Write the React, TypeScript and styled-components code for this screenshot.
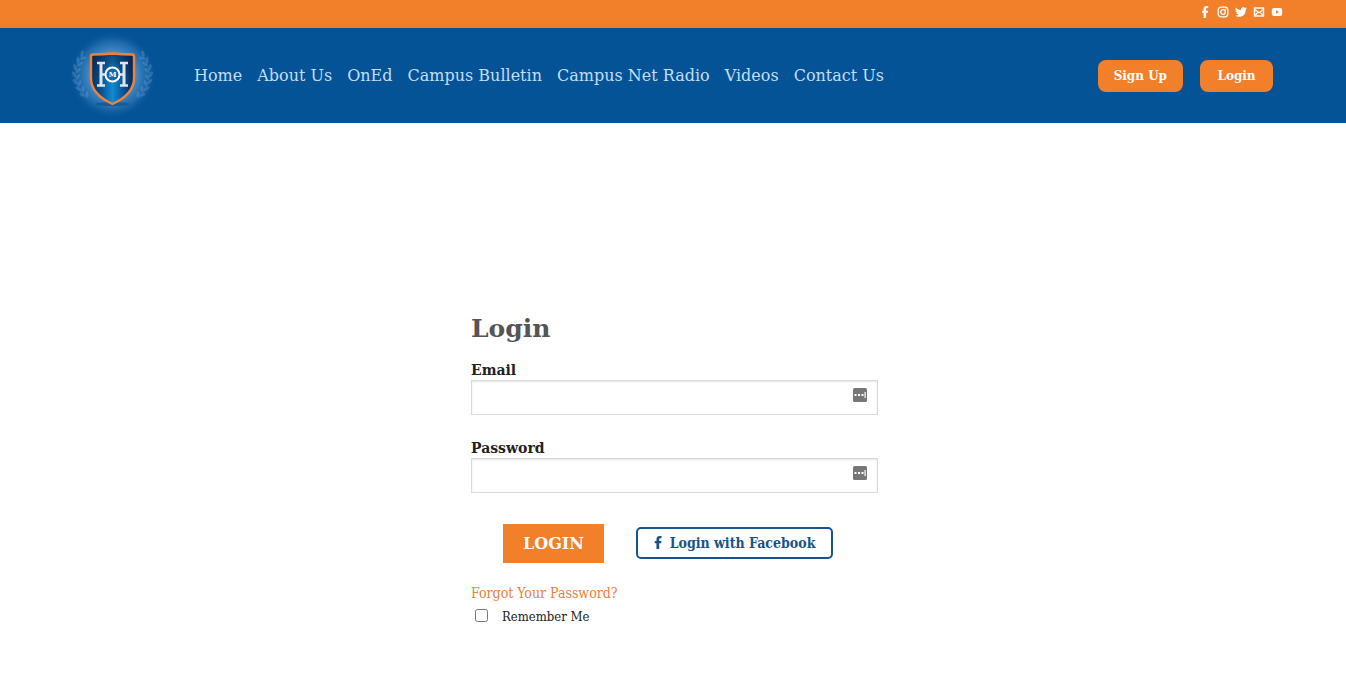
import React from "react";
import styled, { createGlobalStyle } from "styled-components";

const orange = "#f27f2a";
const blue = "#045397";
const condensed = `"DejaVu Serif Condensed", "DejaVu Serif", serif`;

const GlobalStyle = createGlobalStyle`
  *, *::before, *::after { box-sizing: border-box; }
  body {
    margin: 0;
    background: #fff;
    color: #222;
    font-family: "DejaVu Serif", serif;
    font-size: 13px;
  }
`;

const TopBar = styled.div`
  background: ${orange};
  height: 28px;
`;

const Container = styled.div<{ $wide?: boolean }>`
  max-width: ${(p) => (p.$wide ? "1250px" : "1230px")};
  height: 100%;
  margin: 0 auto;
  padding: 0 15px;
  display: flex;
  align-items: center;
`;

const Socials = styled.nav`
  margin-left: auto;
  padding-bottom: 4px;
  display: flex;
  gap: 6px;
`;

const SocialLink = styled.a`
  display: flex;
  color: #fff;
  svg { width: 12px; height: 12px; }
`;

const Header = styled.header`
  background: ${blue};
  height: 95px;
`;

const LogoLink = styled.a`
  display: flex;
  flex: none;
  width: 92px;
  margin: 0 36px 0 -7px;
`;

const Menu = styled.nav`
  display: flex;
  gap: 15px;
`;

const MenuLink = styled.a`
  color: #c3def6;
  font-size: 16px;
  line-height: 24px;
  text-decoration: none;
  white-space: nowrap;
`;

const Actions = styled.div`
  margin-left: auto;
  display: flex;
  gap: 17px;
`;

const PillButton = styled.button`
  min-width: 73px;
  height: 32px;
  padding: 0 16px;
  border: 0;
  border-radius: 8px;
  background: ${orange};
  color: #fff;
  font-family: inherit;
  font-size: 12px;
  font-weight: 700;
  white-space: nowrap;
  cursor: pointer;
`;

const Main = styled.main`
  padding: 188px 0 48px 3px;
`;

const Form = styled.form`
  width: 100%;
  max-width: 407px;
  margin: 0 auto;
`;

const Title = styled.h1`
  margin: 0 0 14px;
  color: #555;
  font-size: 25px;
  line-height: 36px;
`;

const Field = styled.div`
  position: relative;
  margin-bottom: 24px;
`;

const FieldLabel = styled.label`
  display: block;
  font-size: 14px;
  font-weight: 700;
  line-height: 19px;
`;

const FieldInput = styled.input`
  display: block;
  width: 100%;
  height: 35px;
  padding: 0 36px 0 10px;
  border: 1px solid #dadada;
  background: #fff;
  box-shadow: inset 0 1px 2px rgba(0, 0, 0, 0.1);
  font-family: inherit;
  font-size: 14px;
`;

const FieldIcon = styled.svg`
  position: absolute;
  right: 11px;
  bottom: 13px;
`;

const ButtonRow = styled.div`
  display: flex;
  align-items: center;
  gap: 32px;
  margin-top: 31px;
  padding-left: 32px;
`;

const SubmitButton = styled.button`
  height: 39px;
  width: 101px;
  padding: 0;
  border: 0;
  background: ${orange};
  color: #fff;
  font-family: inherit;
  font-size: 16px;
  font-weight: 700;
  text-transform: uppercase;
  cursor: pointer;
`;

const FacebookButton = styled.button`
  display: flex;
  align-items: center;
  justify-content: center;
  gap: 8px;
  width: 197px;
  height: 32px;
  margin-bottom: 2px;
  padding: 0;
  border: 2px solid #17548c;
  border-radius: 5px;
  background: #fff;
  color: #17548c;
  font-family: ${condensed};
  font-size: 14px;
  font-weight: 700;
  white-space: nowrap;
  cursor: pointer;
`;

const ForgotLink = styled.a`
  display: block;
  width: fit-content;
  margin-top: 19px;
  color: #e87f42;
  font-family: ${condensed};
  font-size: 14px;
  line-height: 22px;
  text-decoration: none;
`;

const Remember = styled.label`
  display: flex;
  align-items: center;
  gap: 14px;
  padding-left: 4px;
  font-family: ${condensed};
  line-height: 26px;
`;

const Checkbox = styled.input`
  width: 13px;
  height: 13px;
  margin: 0 0 4px;
`;

function Logo() {
  const crest =
    "M27 24.500Q36.500 24.500 46.500 23.500Q56.500 24.500 66 24.500Q68 24.500 68 26.500V48C68 60 58.500 68.500 46.500 74C34.500 68.500 25 60 25 48V26.500Q25 24.500 27 24.500Z";
  return (
    <svg width="92" height="92" viewBox="0 0 92 92" role="img" aria-label="Campus crest">
      <defs>
        <radialGradient id="glow">
          <stop offset="0" stopColor="#70b4e4" />
          <stop offset="0.450" stopColor="#5c9fd4" stopOpacity="0.900" />
          <stop offset="0.750" stopColor="#3a80bd" stopOpacity="0.550" />
          <stop offset="1" stopColor={blue} stopOpacity="0" />
        </radialGradient>
        <linearGradient id="shield" x1="0" y1="0" x2="1" y2="0">
          <stop offset="0" stopColor="#08305f" />
          <stop offset="0.250" stopColor="#075497" />
          <stop offset="0.500" stopColor="#118bd2" />
          <stop offset="0.750" stopColor="#075497" />
          <stop offset="1" stopColor="#08264e" />
        </linearGradient>
        <linearGradient id="shade" x1="0" y1="0" x2="0" y2="1">
          <stop offset="0" stopColor="#071f45" stopOpacity="0.600" />
          <stop offset="0.500" stopColor="#071f45" stopOpacity="0" />
        </linearGradient>
      </defs>
      <circle cx="46.500" cy="45" r="44" fill="url(#glow)" />
      {[false, true].map((flip) => (
        <g key={String(flip)} transform={flip ? "translate(93 -1) scale(-1 1)" : "translate(0 -1)"} fill="#7fb0d9" opacity="0.280">
          <path d="M17 26C7 37 7 57 21 70" fill="none" stroke="#7fb0d9" strokeWidth="0.800" />
          {[
            [17, 25, 40], [13, 31, 25], [10, 38, 10], [9, 45, 0], [10, 52, -15], [13, 59, -30], [17, 65, -42],
          ].map(([x, y, r]) => (
            <g key={y} transform={`translate(${x} ${y}) rotate(${r})`}>
              <ellipse cx="-1" cy="0" rx="1.500" ry="3.300" transform="rotate(-28)" />
              <ellipse cx="4" cy="1" rx="1.400" ry="3.200" transform="rotate(35)" />
            </g>
          ))}
        </g>
      ))}
      <ellipse cx="46.500" cy="74" rx="17" ry="2" fill="#064477" opacity="0.500" />
      <path d={crest} fill="url(#shield)" />
      <path d={crest} fill="url(#shade)" stroke="#f2803a" strokeWidth="2.400" />
      <g fill="none" stroke="#dfe3ee">
        <path d="M35 33V55M58 33V55" strokeWidth="3" />
        <path d="M31 33H39M31 55.500H39M54 33H62M54 55.500H62M35 44.500H39.500M53.500 44.500H58" strokeWidth="2.400" />
        <circle cx="46.500" cy="44.500" r="7" stroke="#fff" strokeWidth="2" fill="#1268ab" />
      </g>
      <text x="46.500" y="47" textAnchor="middle" fill="#fff" fontSize="7" fontWeight="700">M</text>
    </svg>
  );
}

function FacebookIcon() {
  return (
    <svg width="8" height="13" viewBox="1 0 9 16" fill="currentColor" aria-hidden="true">
      <path d="M3.600 16V9H1.500V6.200H3.600V4C3.600 1.500 5.200 0 7.500 0H9.800V2.700H8.300C7.300 2.700 7 3.200 7 4.100V6.200H9.800L9.400 9H7V16Z" />
    </svg>
  );
}

const socials = [
  { name: "Facebook", icon: <FacebookIcon /> },
  {
    name: "Instagram",
    icon: (
      <svg viewBox="0 0 12 12" fill="none" stroke="currentColor" strokeWidth="1.300">
        <rect x="1.200" y="1.200" width="9.600" height="9.600" rx="2.800" />
        <circle cx="6" cy="6" r="2.300" />
        <circle cx="8.800" cy="3.200" r="0.400" fill="currentColor" strokeWidth="0.500" />
      </svg>
    ),
  },
  {
    name: "Twitter",
    icon: (
      <svg viewBox="0 0 24 24" fill="currentColor">
        <path d="M23.950 4.570a10 10 0 0 1-2.820.770 4.960 4.960 0 0 0 2.160-2.720c-.950.550-2 .950-3.130 1.180a4.920 4.920 0 0 0-8.380 4.480C7.690 8.090 4.070 6.130 1.640 3.160a4.920 4.920 0 0 0 1.520 6.570 4.900 4.900 0 0 1-2.230-.610v.060a4.920 4.920 0 0 0 3.950 4.830 5 5 0 0 1-2.210.080 4.940 4.940 0 0 0 4.600 3.420A9.870 9.870 0 0 1 0 19.540a13.990 13.990 0 0 0 7.550 2.210c9.050 0 14-7.500 14-13.980 0-.210 0-.420-.020-.630a9.940 9.940 0 0 0 2.420-2.570z" />
      </svg>
    ),
  },
  {
    name: "Email",
    icon: (
      <svg viewBox="0 0 12 12" fill="none" stroke="currentColor">
        <rect x="1.500" y="2" width="9" height="8" strokeWidth="1.400" />
        <path d="M2 3.800L6 6.800L10 3.800M2 9.500L4.500 6.700M10 9.500L7.500 6.700" strokeWidth="1.200" />
      </svg>
    ),
  },
  {
    name: "YouTube",
    icon: (
      <svg viewBox="0 0 12 12" fill="currentColor" fillRule="evenodd">
        <path d="M3 2H9Q11.200 2 11.200 4.200V7.800Q11.200 10 9 10H3Q0.800 10 0.800 7.800V4.200Q0.800 2 3 2ZM5 4.200V7.800L8 6Z" />
      </svg>
    ),
  },
];

const menuItems = ["Home", "About Us", "OnEd", "Campus Bulletin", "Campus Net Radio", "Videos", "Contact Us"];

function LoginField({ id, label, type }: { id: string; label: string; type: string }) {
  return (
    <Field>
      <FieldLabel htmlFor={id}>{label}</FieldLabel>
      <FieldInput id={id} name={id} type={type} />
      <FieldIcon width="14" height="14" viewBox="0 0 14 14" aria-hidden="true">
        <rect width="14" height="14" rx="1.500" fill="#777" />
        <path d="M1.500 6H3.500V8H1.500ZM5 6H7V8H5ZM8.500 6H10.500V8H8.500ZM11.500 4H12.700V10H11.500Z" fill="#fff" />
      </FieldIcon>
    </Field>
  );
}

export default function App() {
  return (
    <>
      <GlobalStyle />
      <TopBar>
        <Container $wide>
          <Socials aria-label="Social media">
            {socials.map((s) => (
              <SocialLink key={s.name} href="#" aria-label={s.name}>{s.icon}</SocialLink>
            ))}
          </Socials>
        </Container>
      </TopBar>
      <Header>
        <Container>
          <LogoLink href="#" aria-label="Campus home"><Logo /></LogoLink>
          <Menu aria-label="Main menu">
            {menuItems.map((item) => <MenuLink key={item} href="#">{item}</MenuLink>)}
          </Menu>
          <Actions>
            <PillButton type="button">Sign Up</PillButton>
            <PillButton type="button">Login</PillButton>
          </Actions>
        </Container>
      </Header>
      <Main>
        <Form onSubmit={(e) => e.preventDefault()}>
          <Title>Login</Title>
          <LoginField id="email" label="Email" type="email" />
          <LoginField id="password" label="Password" type="password" />
          <ButtonRow>
            <SubmitButton type="submit">Login</SubmitButton>
            <FacebookButton type="button"><FacebookIcon />Login with Facebook</FacebookButton>
          </ButtonRow>
          <ForgotLink href="#">Forgot Your Password?</ForgotLink>
          <Remember><Checkbox type="checkbox" name="remember" />Remember Me</Remember>
        </Form>
      </Main>
    </>
  );
}
